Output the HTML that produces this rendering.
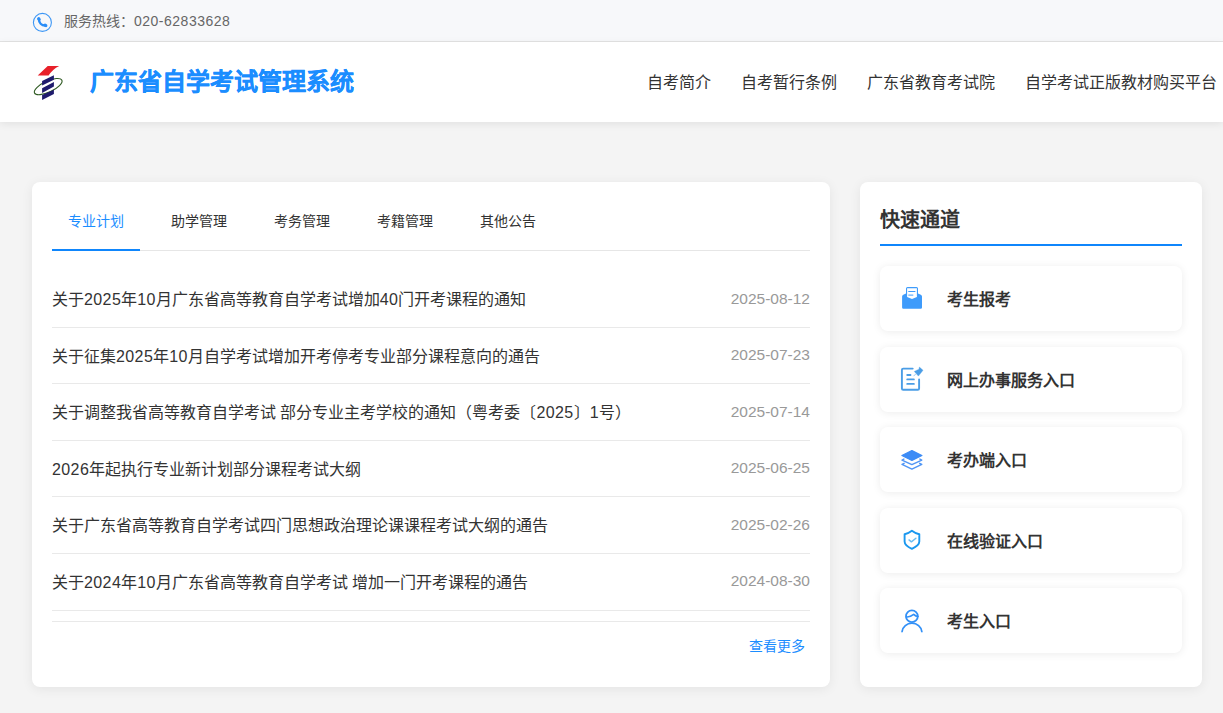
<!DOCTYPE html>
<html lang="zh-CN">
<head>
<meta charset="utf-8">
<title>广东省自学考试管理系统</title>
<style>
*{box-sizing:border-box;margin:0;padding:0}
html,body{width:1223px;height:713px;overflow:hidden}
body{background:#f4f4f4;font-family:"Liberation Sans",sans-serif;color:#333;position:relative}
.topbar{position:absolute;left:0;top:0;width:1223px;height:42px;background:#f7f8fa;border-bottom:1px solid #e3e3e3}
.topbar svg{position:absolute;left:32px;top:12px}
.topbar .hot{position:absolute;left:64px;top:11px;font-size:14px;line-height:20px;color:#666}
.header{position:absolute;left:0;top:42px;width:1223px;height:80px;background:#fff;box-shadow:0 2px 8px rgba(0,0,0,.08)}
.logo{position:absolute;left:30px;top:20px}
.title{position:absolute;left:90px;top:24px;font-size:24px;line-height:32px;font-weight:bold;color:#1b8dff;-webkit-text-stroke:.35px #1b8dff}
.nav{position:absolute;top:30px;font-size:16px;line-height:22px;color:#333;white-space:nowrap}
.card{position:absolute;background:#fff;border-radius:8px;box-shadow:0 2px 12px rgba(0,0,0,.07)}
.left{left:32px;top:182px;width:798px;height:505px}
.right{left:860px;top:182px;width:342px;height:505px}
.tabs{position:absolute;left:20px;top:0;width:758px;height:69px;border-bottom:1px solid #e6e6e6}
.tab{position:absolute;top:29px;font-size:14px;line-height:20px;color:#333;white-space:nowrap}
.tab.on{color:#1b8dff}
.ink{position:absolute;left:0;bottom:-1px;width:88px;height:2px;background:#0f86fc}
.list{position:absolute;left:20px;top:89px;width:758px}
.row{position:relative;height:56.6px;border-bottom:1px solid #e9e9e9}
.row .t{position:absolute;left:0;top:18px;font-size:16px;line-height:22px;color:#333;white-space:nowrap}
.row .d{position:absolute;right:0;top:16.5px;font-size:15.5px;line-height:22px;color:#999;white-space:nowrap}
.row .t i{font-style:normal;letter-spacing:.4px}
.endline{position:absolute;left:20px;top:439px;width:758px;height:1px;background:#e9e9e9}
.more{position:absolute;right:25px;top:454px;font-size:14px;line-height:20px;color:#1b8dff}
.qt{position:absolute;left:20px;top:24px;font-size:20px;line-height:28px;font-weight:bold;color:#333}
.qline{position:absolute;left:20px;top:62px;width:302px;height:2px;background:#0f86fc}
.item{position:absolute;left:20px;width:302px;height:65px;background:#fff;border-radius:8px;box-shadow:0 1px 8px rgba(0,0,0,.08)}
.item svg{position:absolute;left:15px;top:15px}
.item span{position:absolute;left:67px;top:23px;font-size:16px;line-height:22px;font-weight:bold;color:#333;white-space:nowrap}
</style>
</head>
<body>
<div class="topbar">
  <svg width="20" height="20" viewBox="0 0 20 20"><circle cx="10.4" cy="10.4" r="9" fill="none" stroke="#3d97f5" stroke-width="1.1"/><path d="M6.9,7.2 C6.9,10.6 9.6,13.3 13.2,13.5" fill="none" stroke="#2b8ef7" stroke-width="2.4" stroke-linecap="round"/><ellipse cx="6.9" cy="7" rx="1.7" ry="2" transform="rotate(-40 6.9 7)" fill="#2b8ef7"/><ellipse cx="13.5" cy="13.4" rx="2" ry="1.6" transform="rotate(30 13.5 13.4)" fill="#2b8ef7"/></svg>
  <div class="hot">服务热线：<span style="letter-spacing:.5px">020-62833628</span></div>
</div>
<div class="header">
  <svg class="logo" width="36" height="42" viewBox="0 0 36 42">
    <path d="M7.7,13.6 L17.7,4.1 L29.2,4.1 Q22.5,7.5 18.6,13.6 Z" fill="#e8202a"/>
    <ellipse cx="18.2" cy="24.6" rx="15.1" ry="5.5" transform="rotate(-25 18.2 24.6)" fill="none" stroke="#2e5a22" stroke-width="1.1"/>
    <path d="M12.1,18.9 L23.9,13.3 L23.9,17.7 L12.1,23.6 Z M12.1,26.2 L23.9,20 L23.9,24.5 L12.1,30.9 Z M12.1,33 L23.9,27.7 L23.9,32.1 L12.1,38 Z" fill="#1f1b6d"/>
  </svg>
  <div class="title">广东省自学考试管理系统</div>
  <div class="nav" style="left:646.5px">自考简介</div>
  <div class="nav" style="left:741px">自考暂行条例</div>
  <div class="nav" style="left:867px">广东省教育考试院</div>
  <div class="nav" style="left:1025px">自学考试正版教材购买平台</div>
</div>

<div class="card left">
  <div class="tabs">
    <div class="tab on" style="left:16px">专业计划<div class="ink" style="left:-16px;top:38px"></div></div>
    <div class="tab" style="left:119px">助学管理</div>
    <div class="tab" style="left:222px">考务管理</div>
    <div class="tab" style="left:325px">考籍管理</div>
    <div class="tab" style="left:428px">其他公告</div>
  </div>
  <div class="list">
    <div class="row"><div class="t">关于<i>2025</i>年<i>10</i>月广东省高等教育自学考试增加<i>40</i>门开考课程的通知</div><div class="d">2025-08-12</div></div>
    <div class="row"><div class="t">关于征集<i>2025</i>年<i>10</i>月自学考试增加开考停考专业部分课程意向的通告</div><div class="d">2025-07-23</div></div>
    <div class="row"><div class="t">关于调整我省高等教育自学考试 部分专业主考学校的通知（粤考委〔<i>2025</i>〕<i>1</i>号）</div><div class="d">2025-07-14</div></div>
    <div class="row"><div class="t"><i>2026</i>年起执行专业新计划部分课程考试大纲</div><div class="d">2025-06-25</div></div>
    <div class="row"><div class="t">关于广东省高等教育自学考试四门思想政治理论课课程考试大纲的通告</div><div class="d">2025-02-26</div></div>
    <div class="row"><div class="t">关于<i>2024</i>年<i>10</i>月广东省高等教育自学考试 增加一门开考课程的通告</div><div class="d">2024-08-30</div></div>
  </div>
  <div class="endline"></div>
  <div class="more">查看更多</div>
</div>

<div class="card right">
  <div class="qt">快速通道</div>
  <div class="qline"></div>
  <div class="item" style="top:84px"><svg width="35" height="35" viewBox="0 0 35 35" style="top:14px"><path d="M8.3,14.7 L11,13.4 V8.6 Q11,7.1 12.5,7.1 H21.5 Q23,7.1 23,8.6 V13.4 L25.8,14.7 Q27,15.2 27,16.4 V27.4 Q27,28.7 25.7,28.7 H8.4 Q7.1,28.7 7.1,27.4 V16.4 Q7.1,15.2 8.3,14.7 Z" fill="#3e9bfb"/><path d="M12.1,8.3 H21.9 V17 L17,19.1 L12.1,17 Z" fill="#fff"/><path d="M13.7,11.5 H20 M13.7,15.1 H17.9" stroke="#3e9bfb" stroke-width="1" stroke-linecap="round"/></svg><span>考生报考</span></div>
  <div class="item" style="top:164.5px"><svg width="35" height="35" viewBox="0 0 35 35" style="top:15.5px"><path d="M17.7,6.6 H8.2 Q6.9,6.6 6.9,7.9 V26.4 Q6.9,27.7 8.2,27.7 H22.8 Q24.1,27.7 24.1,26.4 V17.4" fill="none" stroke="#4a9de6" stroke-width="1.9" stroke-linecap="round"/><path d="M12.2,13 H15.5 M12.2,17.4 H18.9 M12.2,21.9 H18.9" stroke="#4a9de6" stroke-width="1.8" stroke-linecap="round"/><path d="M24.4,5.1 L28,8.3 L23.4,14.1 L19.3,9.4 L24,7.2 Z" fill="#4a9de6" stroke="#4a9de6" stroke-width=".4" stroke-linejoin="round"/><path d="M20.6,12.1 L18.8,13.9" stroke="#8cc2ee" stroke-width=".9" stroke-linecap="round"/></svg><span>网上办事服务入口</span></div>
  <div class="item" style="top:245px"><svg width="35" height="35" viewBox="0 0 35 35" style="top:15px"><path d="M6.9,13.5 L16.9,8.6 L26.9,13.5 L16.9,18.4 Z" fill="#3d8cf6" stroke="#3d8cf6" stroke-width="1.2" stroke-linejoin="round"/><path d="M8.9,17.1 L7,18.1 L16.9,22.6 L26.8,18.1 L24.9,17.1 M9.1,21.3 L7,22.4 L16.9,27.1 L26.8,22.4 L24.7,21.3" fill="none" stroke="#4f95f5" stroke-width="1.4" stroke-linecap="round" stroke-linejoin="round"/></svg><span>考办端入口</span></div>
  <div class="item" style="top:325.5px"><svg width="35" height="35" viewBox="0 0 35 35" style="top:14.5px"><path d="M16.9,8.8 C14.6,10.6 12.2,11.7 9.6,12.3 V19.5 C9.6,22.4 13.8,25.4 16.9,26.8 C20,25.4 24.3,22.4 24.3,19.5 V12.3 C21.6,11.7 19.2,10.6 16.9,8.8 Z" fill="none" stroke="#1b98ef" stroke-width="1.9" stroke-linejoin="round"/><path d="M14,17.9 L16.4,19.9 L20.9,16.2" fill="none" stroke="#6bbdf2" stroke-width="1.4" stroke-linecap="round" stroke-linejoin="round"/></svg><span>在线验证入口</span></div>
  <div class="item" style="top:406px"><svg width="35" height="35" viewBox="0 0 35 35" style="top:15px"><circle cx="16.9" cy="13.3" r="5.9" fill="none" stroke="#3290f7" stroke-width="1.8"/><path d="M11.2,14 Q15,14.4 18.7,11.4 Q20.6,13.4 23,13.5" fill="none" stroke="#3290f7" stroke-width="1.6" stroke-linecap="round" stroke-linejoin="round"/><path d="M7.1,28.5 A9.9,9.2 0 0 1 26.8,28.5" fill="none" stroke="#3290f7" stroke-width="1.8" stroke-linecap="round"/></svg><span>考生入口</span></div>
</div>
</body>
</html>
